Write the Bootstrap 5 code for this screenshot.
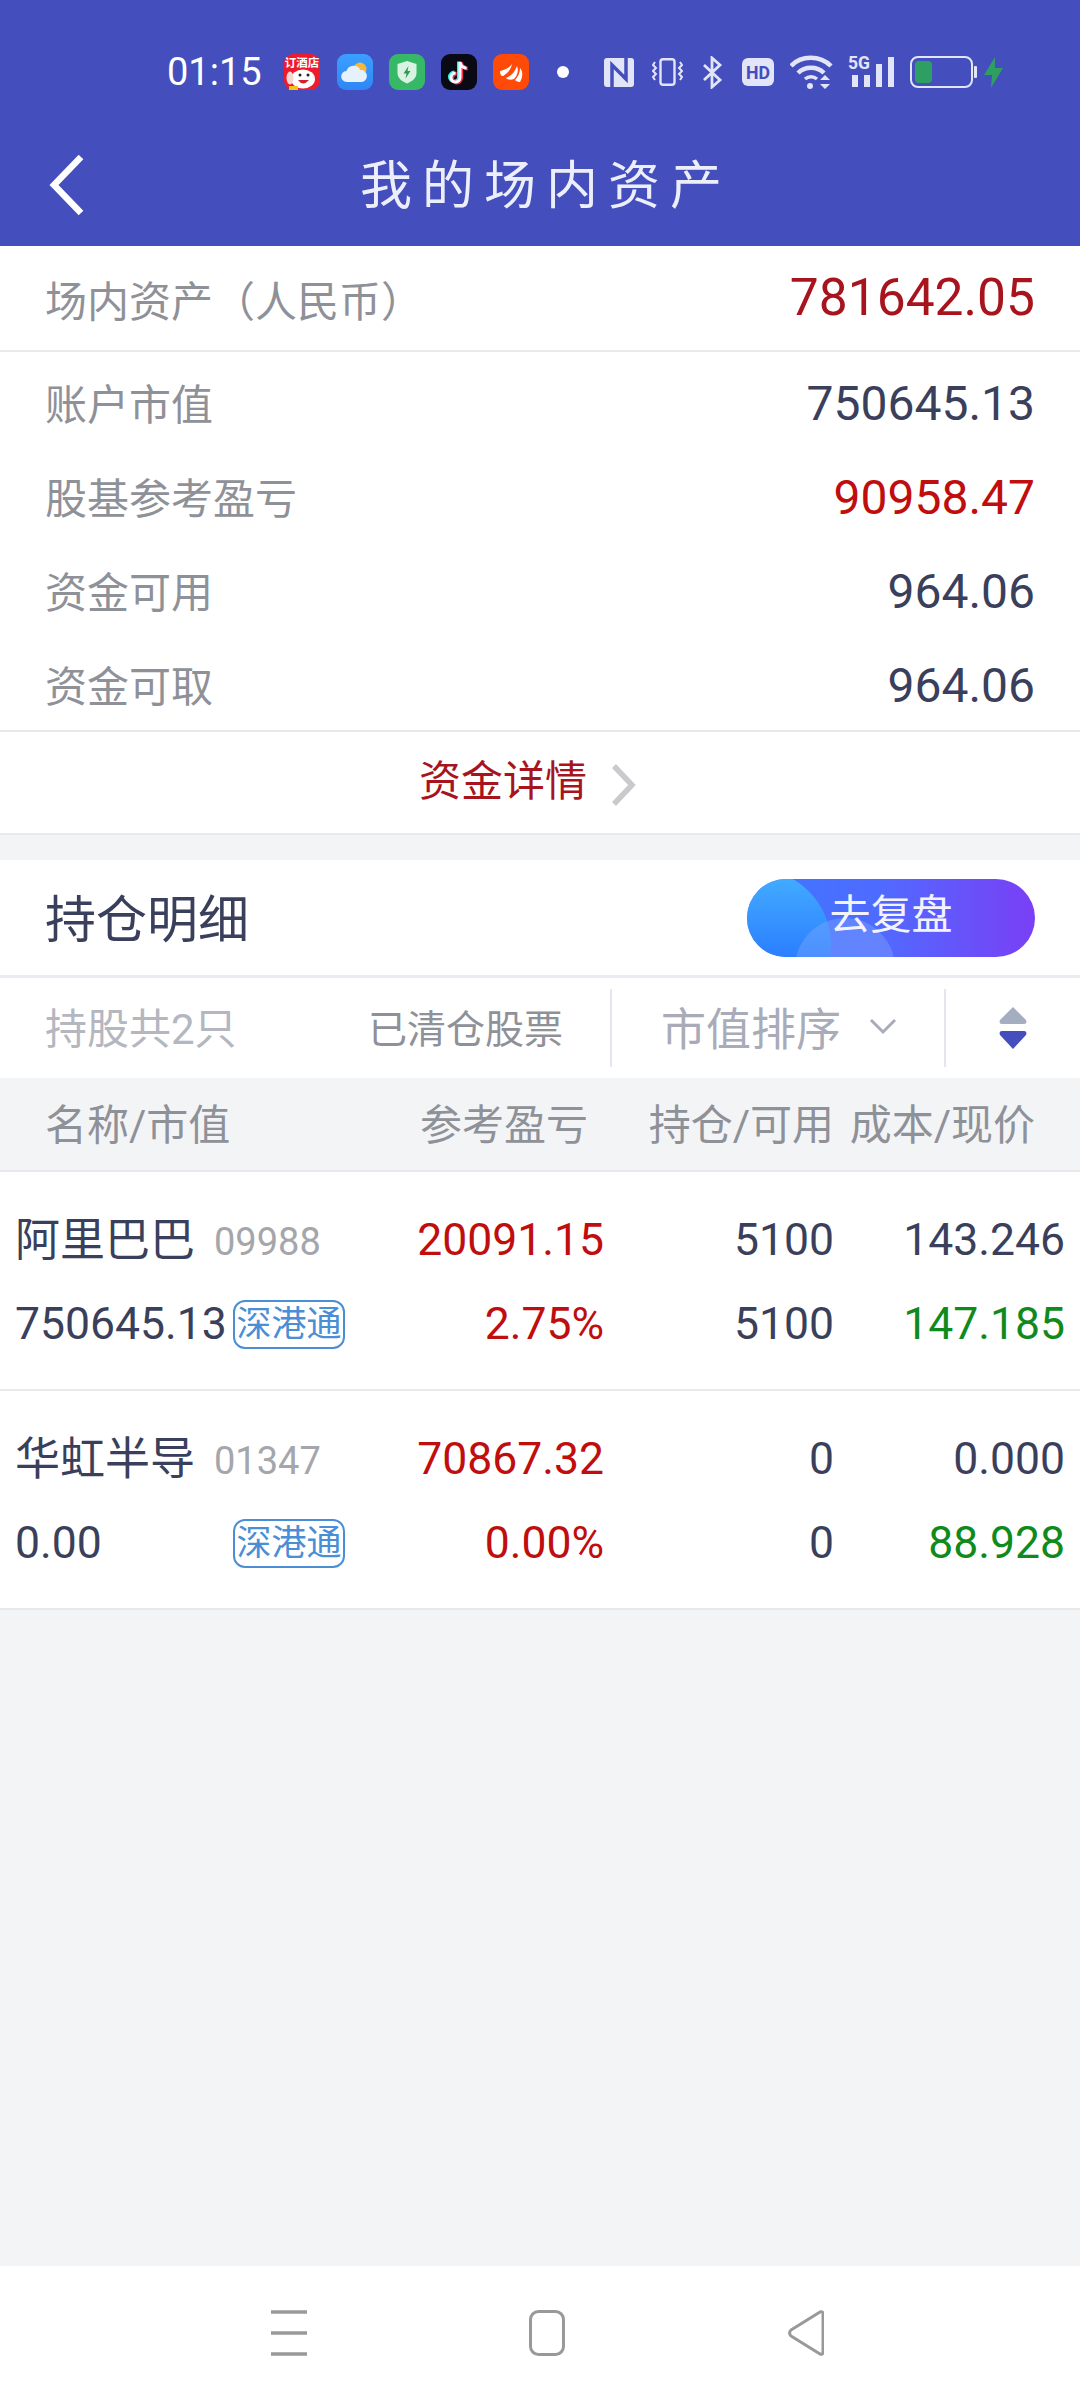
<!DOCTYPE html>
<html lang="zh-CN">
<head>
    <meta charset="UTF-8">
    <meta name="viewport" content="width=device-width, initial-scale=1.0">
    <title>我的场内资产</title>
    <link href="https://cdn.jsdelivr.net/npm/bootstrap@5.3.0/dist/css/bootstrap.min.css" rel="stylesheet">
    <style>
        body {
            background-color: #f3f4f6;
            font-family: Roboto, "Noto Sans CJK SC", sans-serif;
            color: #3a3f5c;
        }

        .top-head { background-color: #444ebd; height: 246px; }
        .status-row { height: 144px; padding: 0 0 0 167px; }
        .status-row svg { display: block; flex: none; }
        .clock { font-size: 38px; color: #fff; line-height: 1; width: 95px; margin-right: 22px; }
        .title-row { height: 102px; padding-left: 49px; }
        .page-title { font-size: 52px; letter-spacing: 10px; color: #eceefa; line-height: 1; margin-left: 275px; margin-top: -17px; }
        .back-icon { margin-top: -20px; }

        .line { border-bottom: 2px solid #e8e9ec; }
        .pad-x { padding-left: 45px; padding-right: 45px; }
        .total-row { height: 106px; }
        .lbl { font-size: 42px; color: #8f9198; line-height: 1; position: relative; top: 2px; }
        .total-row .lbl { top: 5px; }
        .total-val { font-size: 51.500px; color: #a8141e; line-height: 1; }
        .val { font-size: 48px; line-height: 1; color: #3a3f5c; }
        .val-red { color: #c00d0d; }
        .info-rows { padding-top: 5px; height: 380px; }
        .info-row { height: 94px; }
        .detail-link { height: 103px; font-size: 42px; color: #a8141e; padding-right: 24px; }
        .detail-link span { position: relative; top: -1px; }
        .detail-link svg { margin-left: 24px; margin-top: 4px; }
        .sec-gap { height: 25px; }

        .sec-head { height: 118px; border-bottom: 3px solid #e9edf2; }
        .sec-title { font-size: 51px; line-height: 1; color: #3a3f5c; position: relative; top: 3px; }
        .review-btn {
            width: 288px; height: 78px; border-radius: 39px; border: 0; padding: 0 0 4px 0;
            font-size: 41px; color: #f2f3ff; line-height: 1; overflow: hidden;
            background: linear-gradient(90deg, #3c78ff 0%, #4f6bff 45%, #7a3ff5 100%);
        }
        .review-btn::before {
            content: ""; position: absolute; left: -68px; top: -10px; width: 152px; height: 152px; border-radius: 50%;
            background: linear-gradient(180deg, #45b0ff 0%, #2a7dff 60%);
        }
        .review-btn::after {
            content: ""; position: absolute; left: 48px; top: 39px; width: 100px; height: 100px; border-radius: 50%;
            background: rgba(140, 175, 255, .35);
        }
        .review-btn span { position: relative; z-index: 1; }

        .filter-row { height: 100px; }
        .filter-a { font-size: 42px; color: #b4b6c0; width: 369px; padding: 4px 0 0 45px; line-height: 1; flex: none; }
        .filter-b { font-size: 39px; color: #8f9198; width: 242px; padding: 4px 0 0 0; line-height: 1; flex: none; margin-left: -1px; }
        .filter-c { width: 336px; height: 78px; border-left: 2px solid #e3e6ec; border-right: 2px solid #e3e6ec; padding: 4px 0 0 49px; font-size: 45px; color: #a9acb8; line-height: 1; flex: none; }
        .filter-c svg { margin-left: 28px; margin-top: -8px; }
        .filter-d { flex: 1; padding-left: 52px; }

        .tbl-head { height: 94px; padding-top: 4px; border-bottom: 2px solid #e8e9ec; font-size: 42px; color: #8f9198; line-height: 1; }
        .tbl-head > div { flex: none; }
        .th-a { width: 400px; padding-left: 45px; }
        .th-b { width: 188px; text-align: right; }
        .th-c { width: 246px; text-align: right; }
        .th-d { width: 201px; text-align: right; }

        .stock { height: 219px; padding-top: 26px; }
        .stock-line { height: 84px; }
        .cell-a { width: 416px; padding-left: 15px; flex: none; }
        .cell-b { width: 188px; text-align: right; flex: none; }
        .cell-c { width: 230px; text-align: right; flex: none; }
        .cell-d { width: 231px; text-align: right; flex: none; }
        .num { font-size: 44.500px; line-height: 1; }
        .num-red { color: #c00d0d; }
        .num-green { color: #0f8a1c; }
        .stock-name { font-size: 45px; line-height: 1; width: 199px; flex: none; }
        .stock-code { font-size: 38px; color: #a5a6ab; line-height: 1; margin-top: 4px; }
        .stock-mv { font-size: 44.500px; line-height: 1; width: 218px; flex: none; }
        .market-tag { width: 112px; height: 49px; border: 2px solid #4a8ed6; border-radius: 12px; color: #4a8ed6; font-size: 35px; line-height: 1; }

        .sys-nav { height: 134px; background-color: #fff; padding-left: 271px; }
        .sys-nav svg { display: block; }
    </style>
</head>
<body class="d-flex flex-column min-vh-100">

<!-- header with status bar -->
<div class="top-head">
    <div class="status-row d-flex align-items-center">
        <div class="clock">01:15</div>

        <svg width="36" height="36" viewBox="0 0 36 36" style="margin-right:17px">
            <rect width="36" height="36" rx="9" fill="#ee1b2e"/>
            <text x="18" y="12.500" font-size="11.500" font-family="Noto Sans CJK SC" font-weight="700" fill="#fff" text-anchor="middle">订酒店</text>
            <ellipse cx="19" cy="25" rx="12" ry="9.500" fill="#fff"/>
            <ellipse cx="6" cy="24" rx="3.500" ry="6.500" fill="#f3d9d2"/>
            <circle cx="16" cy="21" r="1.500" fill="#222"/>
            <circle cx="24" cy="21" r="1.500" fill="#222"/>
            <path d="M14 26q5 7 11 0z" fill="#d81e2c"/>
            <rect x="5" y="32" width="9" height="4" fill="#f6c21c"/>
        </svg>

        <svg width="36" height="36" viewBox="0 0 36 36" style="margin-right:16px">
            <defs><linearGradient id="skyGrad" x1="0" y1="0" x2="0" y2="1"><stop offset="0" stop-color="#3aa0ff"/><stop offset="1" stop-color="#2f86f5"/></linearGradient></defs>
            <rect width="36" height="36" rx="9" fill="url(#skyGrad)"/>
            <circle cx="23" cy="15" r="6.500" fill="#f5b93a"/>
            <path d="M10 28a5.500 5.500 0 0 1-.6-11 7.500 7.500 0 0 1 14-1 6 6 0 0 1 1 12z" fill="#e6f1fb"/>
        </svg>

        <svg width="36" height="36" viewBox="0 0 36 36" style="margin-right:16px">
            <rect width="36" height="36" rx="9" fill="#37b866"/>
            <path d="M18 7l9.500 3v9c0 5-4 8-9.500 10.500C12.500 27 8.500 24 8.500 19v-9z" fill="#d9f3e2"/>
            <path d="M19.500 12l-5 7.500h3l-1 5 5-7.500h-3z" fill="#2c9a55"/>
        </svg>

        <svg width="36" height="36" viewBox="0 0 36 36" style="margin-right:16px">
            <rect width="36" height="36" rx="9" fill="#0a0a14"/>
            <path d="M19 8v15.500a4.500 4.500 0 1 1-4.500-4.500M19 8c.5 3.500 3 6 6.500 6" fill="none" stroke="#25f4ee" stroke-width="3.600" transform="translate(-1.200 -.6)"/>
            <path d="M19 8v15.500a4.500 4.500 0 1 1-4.500-4.500M19 8c.5 3.500 3 6 6.500 6" fill="none" stroke="#fe2c55" stroke-width="3.600" transform="translate(1.200 .6)"/>
            <path d="M19 8v15.500a4.500 4.500 0 1 1-4.500-4.500M19 8c.5 3.500 3 6 6.500 6" fill="none" stroke="#fff" stroke-width="3"/>
        </svg>

        <svg width="36" height="36" viewBox="0 0 36 36" style="margin-right:28px">
            <rect width="36" height="36" rx="9" fill="#ff4a08"/>
            <path d="M7 17c5-1 9-3 12-7-1 5-4 9-9 12-2 0-3-2-3-5z" fill="#fff"/>
            <path d="M13 24c5-2 9-6 11-12 2 5 0 10-3 13-3 1-6 1-8-1z" fill="#fff"/>
            <path d="M22 26c3-3 5-7 5-12 3 3 3 9 0 14-2 0-4-1-5-2z" fill="#fff"/>
        </svg>

        <svg width="12" height="12" viewBox="0 0 12 12" style="margin-right:35px"><circle cx="6" cy="6" r="6" fill="#fff"/></svg>

        <!-- system icons -->
        <svg width="30" height="29" viewBox="0 0 30 29" style="margin-right:18px">
            <rect width="30" height="29" rx="3" fill="#e2e4f7"/>
            <path d="M8 29V7l14 14V0" fill="none" stroke="#444ebd" stroke-width="3.500"/>
        </svg>

        <svg width="31" height="28" viewBox="0 0 31 28" style="margin-right:19px">
            <rect x="8.500" y="1.200" width="14" height="25.600" rx="2.500" fill="none" stroke="#e2e4f7" stroke-width="2.400"/>
            <path d="M3 4l-2 3 3 3-3 3 3 3-3 3 2 3M28 4l2 3-3 3 3 3-3 3 3 3-2 3" fill="none" stroke="#e2e4f7" stroke-width="2"/>
        </svg>

        <svg width="21" height="33" viewBox="0 0 21 33" style="margin-right:19px">
            <path d="M2 9l16 15-8 7V2l8 7L2 24" fill="none" stroke="#e2e4f7" stroke-width="2.800"/>
        </svg>

        <svg width="32" height="28" viewBox="0 0 32 28" style="margin-right:16px">
            <rect width="32" height="28" rx="6" fill="#e2e4f7"/>
            <text x="16" y="21" font-size="19" font-weight="700" font-family="Roboto" textLength="24" lengthAdjust="spacingAndGlyphs" fill="#444ebd" text-anchor="middle">HD</text>
        </svg>

        <svg width="45" height="34" viewBox="0 0 45 34" style="margin-right:13px">
            <path d="M1 11C11 0 30 0 41 11" fill="none" stroke="#e2e4f7" stroke-width="4.500"/>
            <path d="M8 18c7-7 19-7 26 0" fill="none" stroke="#e2e4f7" stroke-width="4.500"/>
            <path d="M15 24c3.500-3 8.500-3 12 0" fill="none" stroke="#e2e4f7" stroke-width="3.500"/>
            <circle cx="20" cy="31" r="3" fill="#e2e4f7"/>
            <path d="M35 20l-5 5h10zM35 34l-5-5h10z" fill="#e2e4f7"/>
        </svg>

        <svg width="46" height="35" viewBox="0 0 46 35" style="margin-right:16px;margin-bottom:5px">
            <text x="0" y="17" font-size="18" font-weight="700" font-family="Roboto" textLength="22" lengthAdjust="spacingAndGlyphs" fill="#e2e4f7">5G</text>
            <rect x="4" y="23" width="6" height="12" fill="#e2e4f7"/>
            <rect x="16" y="23" width="6" height="12" fill="#e2e4f7"/>
            <rect x="28" y="12" width="6" height="23" fill="#e2e4f7"/>
            <rect x="40" y="5" width="6" height="30" fill="#e2e4f7"/>
        </svg>

        <svg width="67" height="32" viewBox="0 0 67 32" style="margin-right:7px">
            <rect x="1" y="1" width="61" height="30" rx="7" fill="none" stroke="#e2e4f7" stroke-width="2"/>
            <rect x="5" y="5" width="17" height="22" rx="4" fill="#2f9e62"/>
            <rect x="64" y="10" width="3" height="12" rx="1" fill="#e2e4f7"/>
        </svg>

        <svg width="19" height="31" viewBox="0 0 19 31">
            <path d="M11 0L0 18h8l-1 13L19 11h-8z" fill="#2f9e62"/>
        </svg>
    </div>

    <div class="title-row d-flex align-items-center">
        <svg class="back-icon" width="36" height="62" viewBox="0 0 36 62">
            <path d="M32 3L5 31l27 28" fill="none" stroke="#fff" stroke-width="6.500"/>
        </svg>
        <div class="page-title">我的场内资产</div>
    </div>
</div>

<!-- asset summary -->
<div class="bg-white">
    <div class="total-row line pad-x d-flex justify-content-between align-items-center">
        <span class="lbl">场内资产（人民币）</span>
        <span class="total-val">781642.05</span>
    </div>
    <div class="info-rows line pad-x">
        <div class="info-row d-flex justify-content-between align-items-center">
            <span class="lbl">账户市值</span><span class="val">750645.13</span>
        </div>
        <div class="info-row d-flex justify-content-between align-items-center">
            <span class="lbl">股基参考盈亏</span><span class="val val-red">90958.47</span>
        </div>
        <div class="info-row d-flex justify-content-between align-items-center">
            <span class="lbl">资金可用</span><span class="val">964.06</span>
        </div>
        <div class="info-row d-flex justify-content-between align-items-center">
            <span class="lbl">资金可取</span><span class="val">964.06</span>
        </div>
    </div>
    <div class="detail-link line d-flex justify-content-center align-items-center">
        <span>资金详情</span>
        <svg width="26" height="44" viewBox="0 0 26 44"><path d="M3 3l18 19L3 41" fill="none" stroke="#c9cacd" stroke-width="5.500"/></svg>
    </div>
</div>

<div class="sec-gap"></div>

<!-- holdings -->
<div class="bg-white">
    <div class="sec-head pad-x d-flex justify-content-between align-items-center">
        <span class="sec-title">持仓明细</span>
        <button type="button" class="review-btn position-relative"><span>去复盘</span></button>
    </div>
    <div class="filter-row d-flex align-items-center">
        <div class="filter-a">持股共2只</div>
        <div class="filter-b">已清仓股票</div>
        <div class="filter-c d-flex align-items-center">
            <span>市值排序</span>
            <svg width="28" height="18" viewBox="0 0 28 18"><path d="M2 3l12 12L26 3" fill="none" stroke="#a9acb8" stroke-width="3"/></svg>
        </div>
        <div class="filter-d">
            <svg width="30" height="46" viewBox="0 0 30 46" class="d-block">
                <path d="M15 2L2 15q-1.500 4 2 4h22q3.500 0 2-4z" fill="#a5adc0"/>
                <path d="M4 26q-3.500 0-2 4l13 14 13-14q1.500-4-2-4z" fill="#444ebd"/>
            </svg>
        </div>
    </div>
</div>

<div class="tbl-head d-flex align-items-center">
    <div class="th-a">名称/市值</div>
    <div class="th-b">参考盈亏</div>
    <div class="th-c">持仓/可用</div>
    <div class="th-d">成本/现价</div>
</div>

<div id="stockList" class="bg-white"></div>

<div class="flex-grow-1"></div>

<!-- android nav bar -->
<div class="sys-nav d-flex align-items-center">
    <svg width="36" height="46" viewBox="0 0 36 46" style="margin-right:222px">
        <path d="M0 2h36M0 23h36M0 44h36" stroke="#999" stroke-width="3.500"/>
    </svg>
    <svg width="36" height="46" viewBox="0 0 36 46" style="margin-right:223px">
        <rect x="1.500" y="1.500" width="33" height="43" rx="8" fill="none" stroke="#999" stroke-width="3"/>
    </svg>
    <svg width="36" height="46" viewBox="0 0 36 46">
        <path d="M32 2q3-1 3 2v38q0 3-3 2L3 26q-3-3 0-6z" fill="none" stroke="#999" stroke-width="3" stroke-linejoin="round"/>
    </svg>
</div>

<script>
    const stocks = [
        { name: '阿里巴巴', code: '09988', profit: '20091.15', value: '750645.13', rate: '2.75%', hold: '5100', free: '5100', cost: '143.246', price: '147.185' },
        { name: '华虹半导', code: '01347', profit: '70867.32', value: '0.00', rate: '0.00%', hold: '0', free: '0', cost: '0.000', price: '88.928' }
    ];

    document.getElementById('stockList').innerHTML = stocks.map(s => `
        <div class="stock line">
            <div class="stock-line d-flex align-items-center">
                <div class="cell-a d-flex align-items-center">
                    <span class="stock-name">${s.name}</span><span class="stock-code">${s.code}</span>
                </div>
                <div class="cell-b num num-red">${s.profit}</div>
                <div class="cell-c num">${s.hold}</div>
                <div class="cell-d num">${s.cost}</div>
            </div>
            <div class="stock-line d-flex align-items-center">
                <div class="cell-a d-flex align-items-center">
                    <span class="stock-mv">${s.value}</span>
                    <span class="market-tag d-flex align-items-center justify-content-center">深港通</span>
                </div>
                <div class="cell-b num num-red">${s.rate}</div>
                <div class="cell-c num">${s.free}</div>
                <div class="cell-d num num-green">${s.price}</div>
            </div>
        </div>`).join('');
</script>
<script src="https://cdn.jsdelivr.net/npm/bootstrap@5.3.0/dist/js/bootstrap.bundle.min.js"></script>
</body>
</html>
